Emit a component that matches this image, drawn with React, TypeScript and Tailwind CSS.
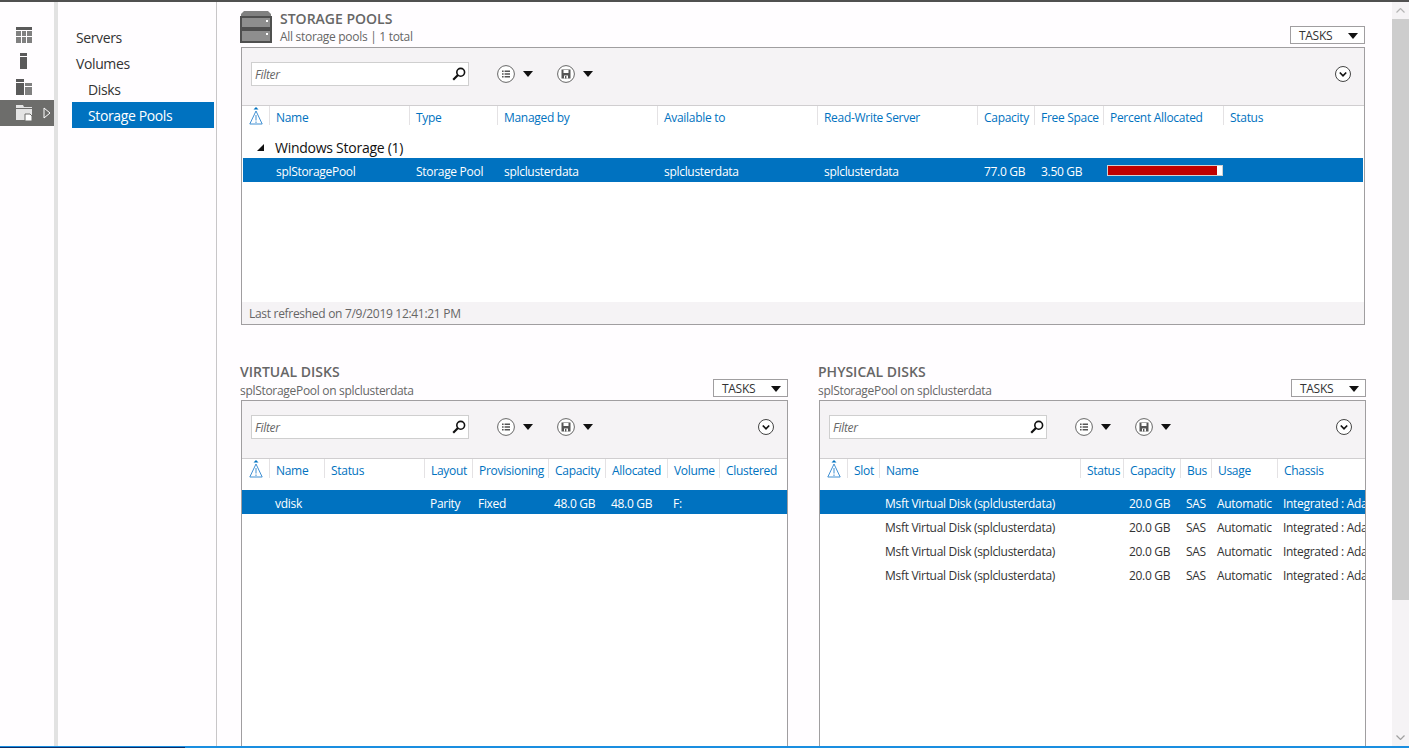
import type { ReactNode } from "react";

const FONT = "font-['Open_Sans','Liberation_Sans',sans-serif]";

type Col = { label: string; w: number };

const poolCols: Col[] = [
  { label: "Name", w: 140 },
  { label: "Type", w: 88 },
  { label: "Managed by", w: 160 },
  { label: "Available to", w: 160 },
  { label: "Read-Write Server", w: 160 },
  { label: "Capacity", w: 57 },
  { label: "Free Space", w: 69 },
  { label: "Percent Allocated", w: 120 },
  { label: "Status", w: 44 },
];

const virtualCols: Col[] = [
  { label: "Name", w: 55 },
  { label: "Status", w: 100 },
  { label: "Layout", w: 48 },
  { label: "Provisioning", w: 76 },
  { label: "Capacity", w: 57 },
  { label: "Allocated", w: 62 },
  { label: "Volume", w: 52 },
  { label: "Clustered", w: 67 },
];

const physicalCols: Col[] = [
  { label: "Slot", w: 32 },
  { label: "Name", w: 201 },
  { label: "Status", w: 43 },
  { label: "Capacity", w: 57 },
  { label: "Bus", w: 31 },
  { label: "Usage", w: 66 },
  { label: "Chassis", w: 88 },
];

function RailIcon({ kind }: { kind: "grid" | "server" | "groups" | "pools" }) {
  if (kind === "grid") {
    return (
      <svg width="16" height="16" viewBox="0 0 16 16" fill="#808080">
        <rect width="16" height="3" fill="#5a5a5a" />
        <rect y="4" width="5" height="5" />
        <rect x="6" y="4" width="4" height="5" />
        <rect x="11" y="4" width="5" height="5" />
        <rect y="10" width="5" height="6" />
        <rect x="6" y="10" width="4" height="6" />
        <rect x="11" y="10" width="5" height="6" />
      </svg>
    );
  }
  if (kind === "server") {
    return (
      <svg width="16" height="16" viewBox="0 0 16 16" fill="#5a5a5a">
        <rect x="4" width="7" height="3" />
        <rect x="4" y="4" width="7" height="12" />
      </svg>
    );
  }
  if (kind === "groups") {
    return (
      <svg width="16" height="16" viewBox="0 0 16 16" fill="#5a5a5a">
        <rect width="8" height="3" />
        <rect y="4" width="8" height="12" />
        <rect x="9" y="4" width="7" height="3" fill="#808080" />
        <rect x="9" y="8" width="7" height="8" fill="#808080" />
      </svg>
    );
  }
  return (
    <svg width="17" height="16" viewBox="0 0 17 16">
      <path d="M0 0h7l1 2h8v13H0z" fill="#e4e4e4" />
      <path d="M0 3.5h16" stroke="#6d6d6b" />
      <path d="M9 9h5l2 2v5H9z" fill="#fff" stroke="#6d6d6b" />
    </svg>
  );
}

function Rail() {
  return (
    <div className="flex w-[54px] shrink-0 flex-col pt-[20px]">
      <div className="flex h-[26px] items-center pl-4"><RailIcon kind="grid" /></div>
      <div className="flex h-[26px] items-center pl-4"><RailIcon kind="server" /></div>
      <div className="flex h-[26px] items-center pl-4"><RailIcon kind="groups" /></div>
      <div className="flex h-[26px] items-center gap-[10px] bg-[#6d6d6b] pl-4">
        <RailIcon kind="pools" />
        <svg width="8" height="12" viewBox="0 0 8 12">
          <path d="M1 1l6 5-6 5z" fill="none" stroke="#fff" />
        </svg>
      </div>
    </div>
  );
}

function Nav() {
  return (
    <div className="w-[159px] shrink-0 border-r border-[#c8c6c8] pt-[22px] text-[14px] tracking-[-0.38px] text-[#333]">
      <div className="flex h-[26px] items-center pl-[18px]">Servers</div>
      <div className="flex h-[26px] items-center pl-[18px]">Volumes</div>
      <div className="flex h-[26px] items-center pl-[30px]">Disks</div>
      <div className="ml-[14px] mr-[2px] flex h-[26px] items-center bg-[#0072c0] pl-4 text-white">Storage Pools</div>
    </div>
  );
}

function PoolIcon() {
  return (
    <svg width="32" height="32" viewBox="0 0 32 32" className="mt-px shrink-0">
      <path d="M4 0h24l3 3v3H1V3z" fill="#808080" />
      <rect x="0" y="5" width="32" height="13" fill="#4f4f4f" />
      <rect x="0" y="18" width="32" height="14" fill="#4f4f4f" />
      <rect x="2" y="7" width="28" height="9" fill="#8e8e8e" />
      <rect x="2" y="20" width="28" height="10" fill="#8e8e8e" />
      <rect x="26" y="9" width="2" height="2" fill="#fff" />
      <rect x="26" y="22" width="2" height="2" fill="#fff" />
    </svg>
  );
}

function Caret() {
  return (
    <svg width="10" height="6" viewBox="0 0 10 6" className="shrink-0">
      <path d="M0 0h10L5 6z" fill="#111" />
    </svg>
  );
}

function ListIcon() {
  return (
    <svg width="18" height="18" viewBox="0 0 18 18" className="shrink-0">
      <circle cx="9" cy="9" r="8.4" fill="#fff" stroke="#666" />
      <path d="M5 5.5h1.6v1.6H5zM5 8.2h1.6v1.6H5zM5 10.9h1.6v1.6H5zM7.6 5.5H13v1.6H7.6zM7.6 8.2H13v1.6H7.6zM7.6 10.9H13v1.6H7.6z" fill="#555" />
    </svg>
  );
}

function SaveIcon() {
  return (
    <svg width="18" height="18" viewBox="0 0 18 18" className="shrink-0">
      <circle cx="9" cy="9" r="8.4" fill="#fff" stroke="#666" />
      <path d="M4.5 4.5h9v9h-9z" fill="#555" />
      <path d="M6.5 5h5v3h-5zM7 10.5h4v3H7z" fill="#fff" />
      <path d="M8 11h1.4v2.5H8z" fill="#555" />
    </svg>
  );
}

function ExpandIcon() {
  return (
    <svg width="16" height="16" viewBox="0 0 16 16" className="shrink-0">
      <circle cx="8" cy="8" r="7.5" fill="#fff" stroke="#444" />
      <path d="M4.8 6.5 8 9.8l3.2-3.3" fill="none" stroke="#111" strokeWidth="1.7" />
    </svg>
  );
}

function SearchIcon() {
  return (
    <svg width="14" height="14" viewBox="0 0 14 14" className="shrink-0">
      <circle cx="8.7" cy="5.3" r="3.9" fill="none" stroke="#111" strokeWidth="1.6" />
      <path d="M6 8 1.2 12.8" stroke="#111" strokeWidth="2.2" />
    </svg>
  );
}

function WarnSort() {
  return (
    <svg width="14" height="18" viewBox="0 0 14 18" className="shrink-0">
      <path d="M4.5 2.5 7 0l2.5 2.5z" fill="#0072c0" />
      <path d="M7 4 .8 17h12.4z" fill="none" stroke="#3f8fd2" />
      <path d="M7 8v5.5M7 14.5V16" stroke="#3f8fd2" />
    </svg>
  );
}

function Tasks() {
  return (
    <div className="flex h-[18px] w-[75px] items-center justify-between border border-[#a09ea0] bg-white pl-2 pr-[6px] pt-px text-[12px] text-[#333]">
      TASKS
      <Caret />
    </div>
  );
}

function Toolbar({ expandGap }: { expandGap: number }) {
  return (
    <div className="flex h-[58px] shrink-0 items-center border-b border-[#d0ced0] bg-[#f5f3f5] pb-[5px] pl-[9px]">
      <div className="flex h-[24px] w-[218px] items-center justify-between border border-[#cfcfcf] bg-white pl-[3px] pr-[2px] text-[12px] italic text-[#666]">
        <span className="pt-[2px]">Filter</span>
        <SearchIcon />
      </div>
      <div className="ml-[28px] flex items-center gap-[8px]"><ListIcon /><Caret /></div>
      <div className="ml-[24px] flex items-center gap-[8px]"><SaveIcon /><Caret /></div>
      <div style={{ marginLeft: expandGap }}><ExpandIcon /></div>
    </div>
  );
}

function HeaderRow({ cols }: { cols: Col[] }) {
  return (
    <div className="flex h-[26px] shrink-0 items-start text-[12px] text-[#0072c0]">
      <div className="flex w-[27px] shrink-0 justify-center pt-px"><WarnSort /></div>
      {cols.map((c) => (
        <div
          key={c.label}
          className="h-[19px] shrink-0 whitespace-nowrap border-l border-[#e4e2e4] pl-[6px] leading-[24px]"
          style={{ width: c.w }}
        >
          {c.label}
        </div>
      ))}
    </div>
  );
}

function DataRow({ cells, cols, pad, iconW, selected }: { cells: ReactNode[]; cols: Col[]; pad: number; iconW: number; selected?: boolean }) {
  return (
    <div className={`flex h-[24px] shrink-0 items-center overflow-hidden whitespace-nowrap pt-[3px] text-[12px] ${selected ? "bg-[#0072c0] text-white" : "text-[#333]"}`}>
      <div className="shrink-0" style={{ width: iconW }} />
      {cols.map((c, i) => (
        <div key={c.label} className="shrink-0" style={{ width: c.w, paddingLeft: pad }}>
          {cells[i]}
        </div>
      ))}
    </div>
  );
}

function Allocated() {
  return (
    <div className="ml-[-3px] mt-[-3px] flex h-[11px] w-[116px] border border-[#d0d0d0] bg-white">
      <div className="h-full w-[109px] bg-[#c00000]" />
    </div>
  );
}

function StoragePools() {
  return (
    <div className="w-[1148px] pl-[23px]">
      <div className="flex h-[45px] items-start pt-[8px]">
        <PoolIcon />
        <div className="ml-[8px] flex-1">
          <div className="text-[14px] font-semibold leading-[18px] tracking-normal text-[#666]">STORAGE POOLS</div>
          <div className="text-[12px] leading-[18px] text-[#666]">All storage pools | 1 total</div>
        </div>
        <div className="mt-[16px]"><Tasks /></div>
      </div>
      <div className="ml-px flex w-[1124px] flex-col border border-[#a09ea0] bg-white">
        <Toolbar expandGap={742} />
        <HeaderRow cols={poolCols} />
        <div className="flex h-[26px] shrink-0 items-center pl-[15px] pt-[4px] text-[14px] tracking-[-0.26px] text-[#111]">
          <svg width="7" height="7" viewBox="0 0 7 7" className="mr-[11px]"><path d="M7 0v7H0z" fill="#111" /></svg>
          Windows Storage (1)
        </div>
        <div className="ml-px mr-px">
          <DataRow
            selected
            cols={poolCols}
            pad={7}
            iconW={26}
            cells={[
              "splStoragePool",
              "Storage Pool",
              "splclusterdata",
              "splclusterdata",
              "splclusterdata",
              "77.0 GB",
              "3.50 GB",
              <Allocated />,
            ]}
          />
        </div>
        <div className="h-[120px]" />
        <div className="flex h-[22px] items-center bg-[#f5f3f5] pl-[7px] pt-[2px] text-[12px] text-[#666]">
          Last refreshed on 7/9/2019 12:41:21 PM
        </div>
      </div>
    </div>
  );
}

function DiskPanel({ title, cols, rows }: { title: string; cols: Col[]; rows: string[][] }) {
  return (
    <div className="flex min-h-0 w-[548px] flex-col">
      <div className="flex h-[37px] shrink-0 items-start">
        <div className="flex-1">
          <div className="text-[14px] font-semibold leading-[18px] tracking-normal text-[#666]">{title}</div>
          <div className="mt-[2px] text-[12px] leading-[16px] text-[#666]">splStoragePool on splclusterdata</div>
        </div>
        <div className="mt-[16px]"><Tasks /></div>
      </div>
      <div className="ml-px flex min-h-0 flex-1 flex-col overflow-hidden border-x border-t border-[#a09ea0] bg-white">
        <Toolbar expandGap={165} />
        <HeaderRow cols={cols} />
        <div className="h-[5px] shrink-0" />
        {rows.map((r, i) => (
          <DataRow key={i} selected={i === 0} cols={cols} pad={6} iconW={27} cells={r} />
        ))}
      </div>
    </div>
  );
}

const msft = ["", "Msft Virtual Disk (splclusterdata)", "", "20.0 GB", "SAS", "Automatic", "Integrated : Adapter"];

export default function App() {
  return (
    <div className={`flex h-screen w-full flex-col overflow-hidden bg-[#fffdff] tracking-[-0.3px] ${FONT}`}>
      <div className="h-[2px] shrink-0 bg-[#505050]" />
      <div className="flex min-h-0 flex-1">
        <Rail />
        <div className="w-[4px] shrink-0 bg-[#e2e2e2]" />
        <Nav />
        <div className="flex min-w-0 flex-1 flex-col">
          <StoragePools />
          <div className="mt-[38px] flex min-h-0 flex-1 gap-[30px] pl-[23px]">
            <DiskPanel
              title="VIRTUAL DISKS"
              cols={virtualCols}
              rows={[["vdisk", "", "Parity", "Fixed", "48.0 GB", "48.0 GB", "F:", ""]]}
            />
            <DiskPanel title="PHYSICAL DISKS" cols={physicalCols} rows={[msft, msft, msft, msft]} />
          </div>
        </div>
        <div className="flex w-[17px] shrink-0 flex-col bg-[#f5f3f5]">
          <div className="flex h-[17px] items-center justify-center">
            <svg width="9" height="5" viewBox="0 0 9 5"><path d="M.5 4.5l4-4 4 4" fill="none" stroke="#b5b5b5" strokeWidth="1.2" /></svg>
          </div>
          <div className="h-[581px] bg-[#cdcdcd]" />
          <div className="flex-1" />
          <div className="flex h-[17px] items-center justify-center">
            <svg width="9" height="5" viewBox="0 0 9 5"><path d="M.5.5l4 4 4-4" fill="none" stroke="#a0a0a0" strokeWidth="1.2" /></svg>
          </div>
        </div>
      </div>
      <div className="flex h-[2px] shrink-0 bg-[#1a8ee0]">
        <div className="h-px w-[185px] self-end bg-[#0a2c6a]" />
      </div>
    </div>
  );
}
